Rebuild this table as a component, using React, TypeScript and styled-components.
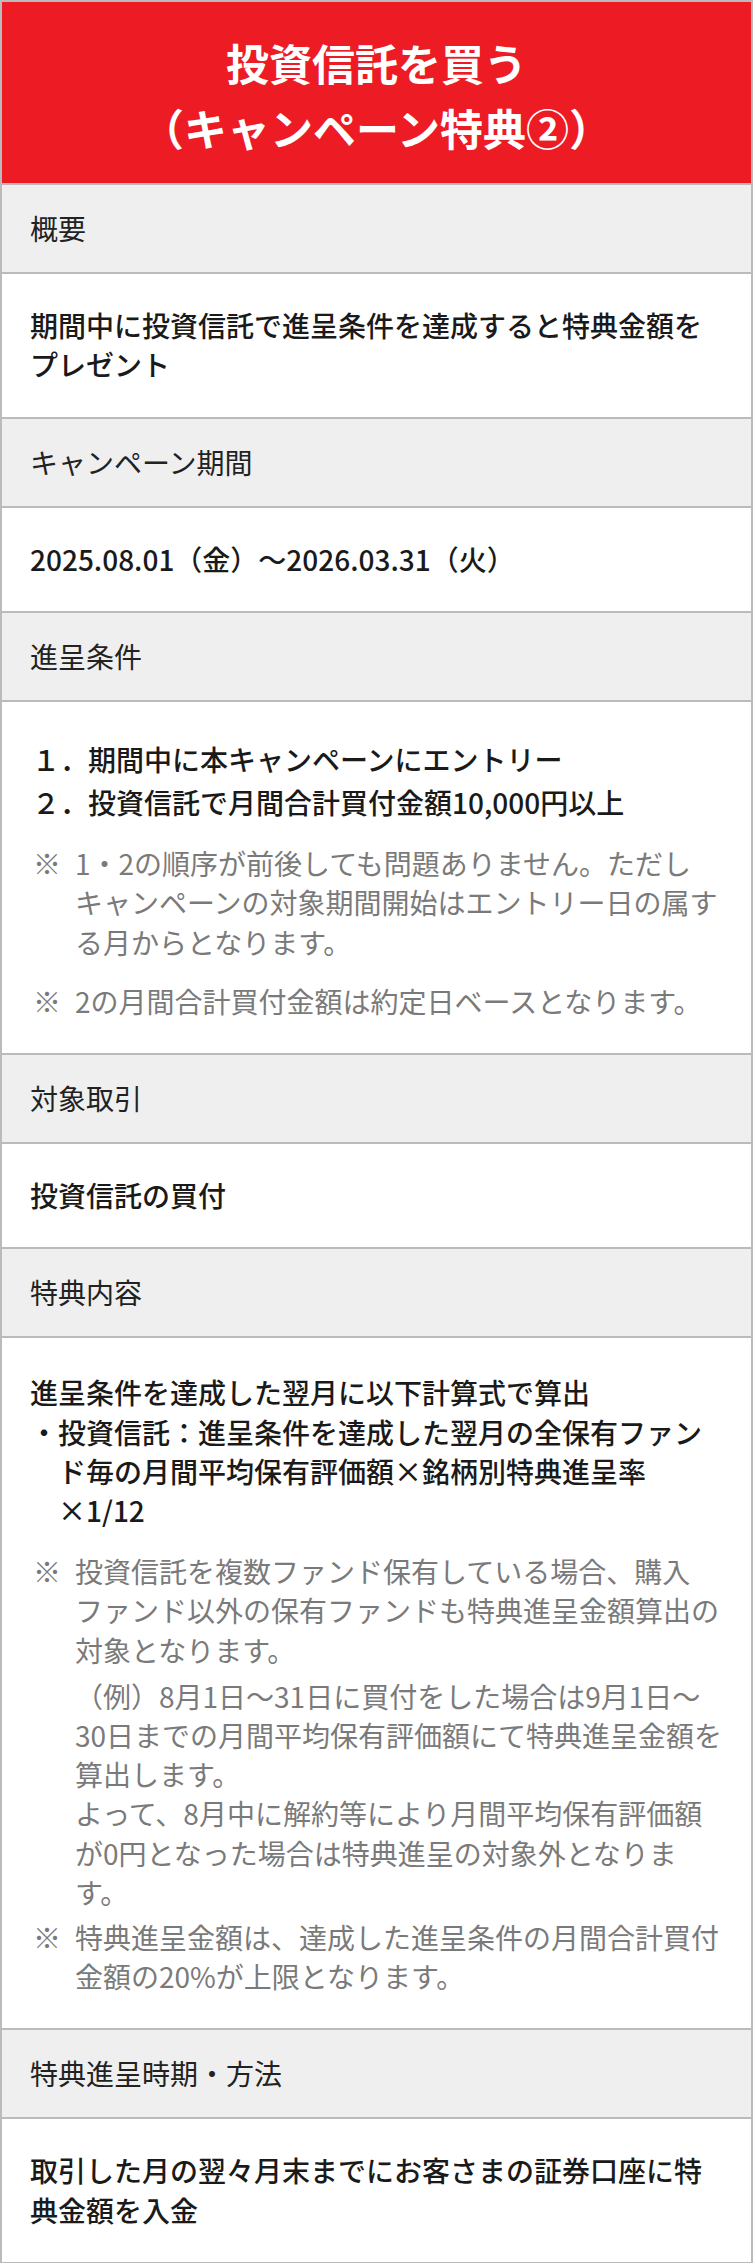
import React from "react";
import styled, {createGlobalStyle} from "styled-components";

const GlobalStyle = createGlobalStyle`
  html, body {
    margin: 0;
    padding: 0;
    background: #fff;
  }
  body {
    font-family: "Noto Sans CJK JP", "Noto Sans", sans-serif;
    color: #1a1a1a;
  }
  * {
    box-sizing: border-box;
  }
`;

const Panel = styled.section`
  width: 753px;
  border: 2px solid #bbbbbb;
  border-bottom: none;
  background: #fff;
  line-break: strict;
`;

const Title = styled.h1`
  margin: 0;
  padding: 28px 20px 24px;
  background: #ed1c24;
  color: #fff;
  font-size: 43px;
  font-weight: 700;
  line-height: 1.5;
  text-align: center;
  border-bottom: 2px solid #bbbbbb;
`;

const Label = styled.div`
  padding: 24px 28px;
  background: #efefef;
  font-size: 28px;
  font-weight: 400;
  line-height: 1.4;
  color: #222;
  border-bottom: 2px solid #bbbbbb;
`;

const Body = styled.div`
  padding: 32px 28px;
  font-size: 28px;
  font-weight: 500;
  line-height: 1.4;
  color: #1a1a1a;
  border-bottom: 2px solid #bbbbbb;
`;

const Text = styled.p<{ $top?: number }>`
  margin: ${p => p.$top ?? 0}px 0 0;
`;

const Steps = styled.ol`
  list-style: none;
  margin: 4px 0 0;
  padding: 0;
  line-height: 43px;
`;

const Step = styled.li`
  display: flex;
  padding-left: 2px;
`;

const StepNo = styled.span`
  flex: none;
  width: 56px;
`;

const Bullet = styled.div<{ $top?: number }>`
  display: flex;
  margin-top: ${p => p.$top ?? 0}px;
`;

const BulletMark = styled.span`
  flex: none;
  width: 28px;
`;

const Note = styled.div<{ $top?: number }>`
  display: flex;
  margin-top: ${p => p.$top ?? 0}px;
  color: #7a7a7a;
  font-weight: 400;
`;

const NoteMark = styled.span`
  flex: none;
  width: 45px;
  padding-left: 3px;
`;

const NoteText = styled.div`
  flex: 1;
  min-width: 0;
`;

const NoBreak = styled.span`
  white-space: nowrap;
`;

const App: React.FC = () => {
    return (
        <>
            <GlobalStyle/>
            <Panel lang="ja">
                <Title>投資信託を買う<br/>（キャンペーン特典②）</Title>

                <Label>概要</Label>
                <Body>期間中に投資信託で進呈条件を達成すると特典金額をプレゼント</Body>

                <Label>キャンペーン期間</Label>
                <Body>2025.08.01（金）～2026.03.31（火）</Body>

                <Label>進呈条件</Label>
                <Body>
                    <Steps>
                        <Step><StepNo>１．</StepNo>期間中に本キャンペーンにエントリー</Step>
                        <Step><StepNo>２．</StepNo>投資信託で月間合計買付金額10,000円以上</Step>
                    </Steps>
                    <Note $top={20}>
                        <NoteMark>※</NoteMark>
                        <NoteText>1・2の順序が前後しても問題ありません。ただしキャンペーンの対象期間開始はエントリー日の属する月からとなります。</NoteText>
                    </Note>
                    <Note $top={20}>
                        <NoteMark>※</NoteMark>
                        <NoteText>2の月間合計買付金額は約定日ベースとなります。</NoteText>
                    </Note>
                </Body>

                <Label>対象取引</Label>
                <Body>投資信託の買付</Body>

                <Label>特典内容</Label>
                <Body>
                    <Text $top={3}>進呈条件を達成した翌月に以下計算式で算出</Text>
                    <Bullet>
                        <BulletMark>・</BulletMark>
                        <div>投資信託：進呈条件を達成した翌月の全保有ファンド毎の月間平均保有評価額×銘柄別特典進呈率<NoBreak>×1/12</NoBreak></div>
                    </Bullet>
                    <Note $top={22}>
                        <NoteMark>※</NoteMark>
                        <NoteText>
                            投資信託を複数ファンド保有している場合、購入ファンド以外の保有ファンドも特典進呈金額算出の対象となります。
                            <Text $top={7}>（例）8月1日～31日に買付をした場合は9月1日～30日までの月間平均保有評価額にて特典進呈金額を算出します。<br/>よって、8月中に解約等により月間平均保有評価額が0円となった場合は特典進呈の対象外となります。</Text>
                        </NoteText>
                    </Note>
                    <Note $top={6}>
                        <NoteMark>※</NoteMark>
                        <NoteText>特典進呈金額は、達成した進呈条件の月間合計買付金額の20%が上限となります。</NoteText>
                    </Note>
                </Body>

                <Label>特典進呈時期・方法</Label>
                <Body>取引した月の翌々月末までにお客さまの証券口座に特典金額を入金</Body>
            </Panel>
        </>
    )
}

export default App;
